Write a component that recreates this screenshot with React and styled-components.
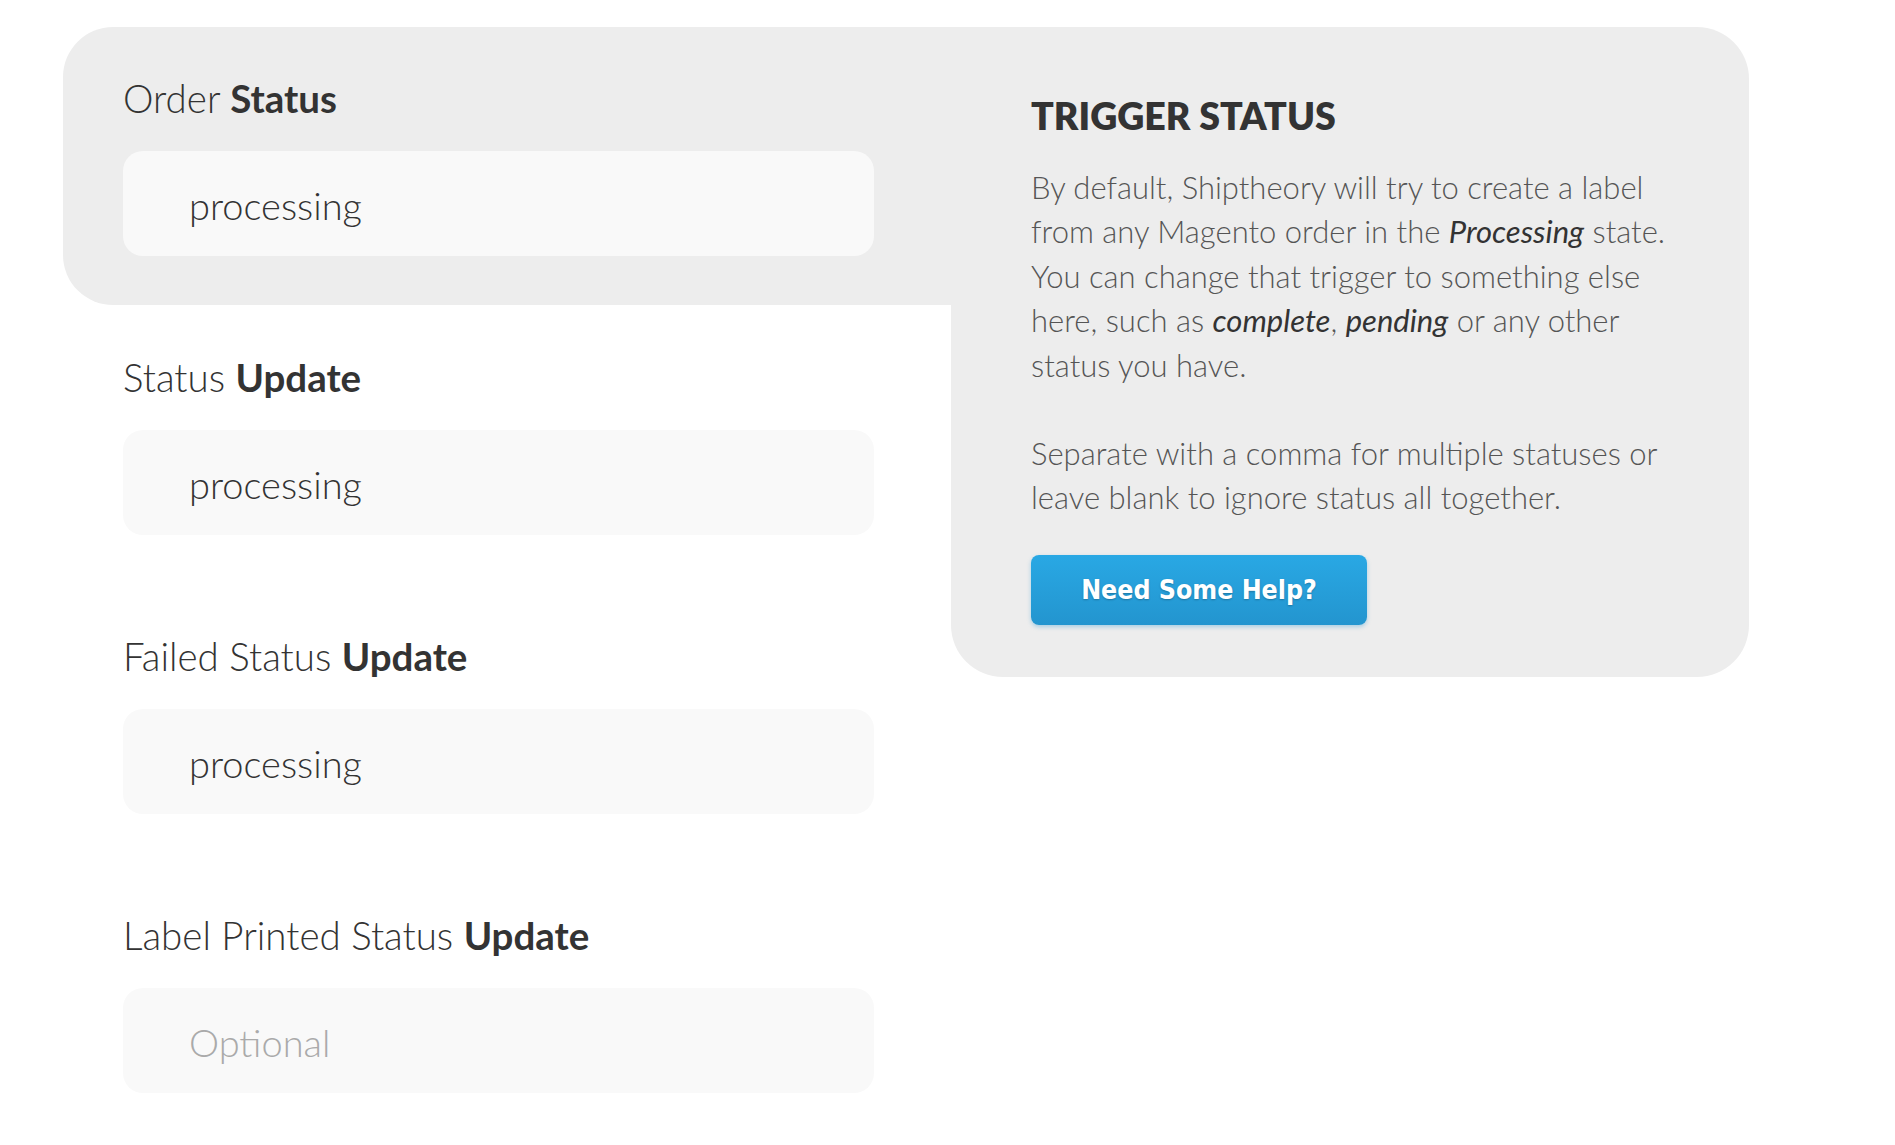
import React from 'react';
import styled, { createGlobalStyle } from 'styled-components';

const GlobalStyle = createGlobalStyle`
  body {
    margin: 0;
    background: #ffffff;
    font-family: Lato, 'Open Sans', sans-serif;
  }
`;

const Page = styled.div`
  display: flex;
  align-items: flex-start;
  padding: 27px 0 0 63px;
`;

const LeftColumn = styled.div`
  width: 888px;
  display: flex;
  flex-direction: column;
`;

const FieldSection = styled.div`
  padding: ${(props) => (props.$highlighted ? '47px' : '48px')} 77px 49px 60px;
  background: ${(props) => (props.$highlighted ? '#ededed' : 'transparent')};
  border-radius: 50px 0 0 50px;
`;

const Label = styled.label`
  display: block;
  font-size: 38.5px;
  line-height: 48px;
  font-weight: 300;
  color: #333;

  strong {
    font-weight: 700;
  }
`;

const Input = styled.input`
  display: block;
  box-sizing: border-box;
  width: 751px;
  height: 105px;
  margin-top: 29px;
  padding: 2px 0 0 66px;
  border: none;
  border-radius: 20px;
  background: #f9f9f9;
  font-family: Lato, 'Open Sans', sans-serif;
  font-size: 38px;
  font-weight: 300;
  color: #333;
  outline: none;

  &::placeholder {
    color: #aaa;
  }
`;

const InfoPanel = styled.div`
  width: 798px;
  box-sizing: border-box;
  padding: 67px 80px 52px 80px;
  background: #ededed;
  border-radius: 0 52px 52px 52px;
`;

const Title = styled.h2`
  margin: 0;
  font-size: 37.5px;
  line-height: 44px;
  font-weight: 800;
  color: #333;
`;

const Paragraph = styled.p`
  margin: ${(props) => props.$gap} 0 0;
  font-size: 31px;
  line-height: 44.4px;
  font-weight: 300;
  color: #555;
  white-space: nowrap;

  em {
    font-weight: 400;
    color: #333;
  }
`;

const HelpButton = styled.button`
  display: block;
  margin-top: 35px;
  width: 336px;
  height: 70px;
  border: none;
  border-radius: 8px;
  background: linear-gradient(#29a8e4, #2395cf);
  box-shadow: 0 2px 4px rgba(41, 150, 210, 0.35);
  color: #fff;
  font-family: 'DejaVu Sans Condensed', 'DejaVu Sans', sans-serif;
  font-stretch: condensed;
  font-size: 26.5px;
  font-weight: 700;
  text-shadow: 0 1px 2px rgba(0, 0, 0, 0.25);
  cursor: pointer;
`;

const fields = [
  { light: 'Order', bold: 'Status', value: 'processing' },
  { light: 'Status', bold: 'Update', value: 'processing' },
  { light: 'Failed Status', bold: 'Update', value: 'processing' },
  { light: 'Label Printed Status', bold: 'Update', value: '' },
];

const App = () => {
  return (
    <>
      <GlobalStyle />
      <Page>
        <LeftColumn>
          {fields.map((field, i) => (
            <FieldSection key={i} $highlighted={i === 0}>
              <Label>
                {field.light} <strong>{field.bold}</strong>
              </Label>
              <Input defaultValue={field.value} placeholder='Optional' />
            </FieldSection>
          ))}
        </LeftColumn>
        <InfoPanel>
          <Title>TRIGGER STATUS</Title>
          <Paragraph $gap='27px'>
            By default, Shiptheory will try to create a label
            <br />
            from any Magento order in the <em>Processing</em> state.
            <br />
            You can change that trigger to something else
            <br />
            here, such as <em>complete</em>, <em>pending</em> or any other
            <br />
            status you have.
          </Paragraph>
          <Paragraph $gap='44px'>
            Separate with a comma for multiple statuses or
            <br />
            leave blank to ignore status all together.
          </Paragraph>
          <HelpButton>Need Some Help?</HelpButton>
        </InfoPanel>
      </Page>
    </>
  );
};

export default App;
